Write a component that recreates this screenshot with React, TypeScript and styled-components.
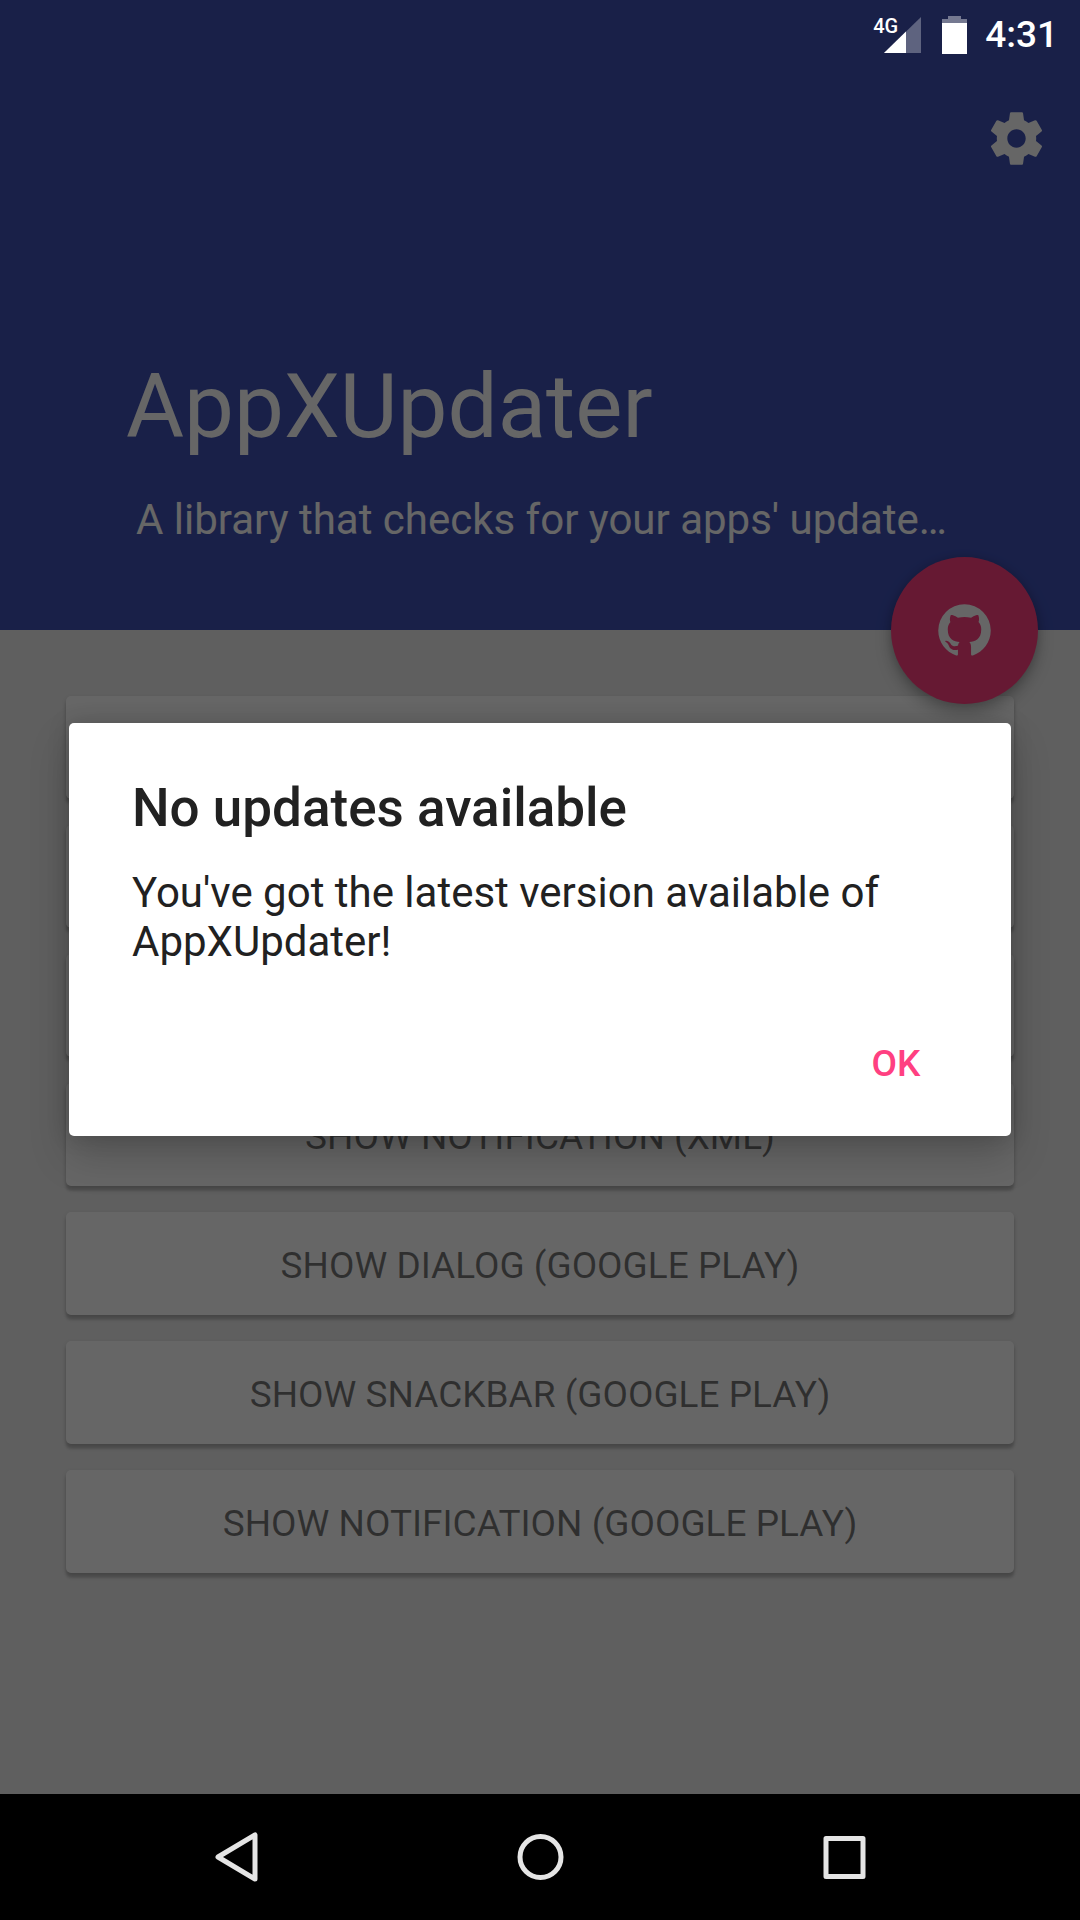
import React from "react";
import styled, { createGlobalStyle } from "styled-components";

const GlobalStyle = createGlobalStyle`
  * { box-sizing: border-box; }
  body {
    margin: 0;
    background: #000;
    font-family: Roboto, "Noto Sans", sans-serif;
  }
  button {
    margin: 0;
    padding: 0;
    border: 0;
    background: none;
    font: inherit;
    cursor: pointer;
  }
  h1, h2, p { margin: 0; font-weight: 400; }
  svg { display: block; }
`;

const Device = styled.div`
  display: flex;
  flex-direction: column;
  min-height: 100vh;
`;

const Stage = styled.div`
  position: relative;
  flex: 1;
  display: flex;
  flex-direction: column;
  background: #ededed;
`;

const StatusBar = styled.div`
  position: absolute;
  inset: 0 0 auto 0;
  z-index: 4;
  height: 66px;
  padding: 3px 22px 0;
  display: flex;
  align-items: center;
  justify-content: flex-end;
  color: #fff;
`;

const Network = styled.div`
  display: flex;
  align-items: flex-start;
  height: 40px;
  margin-right: 21px;
`;

const NetworkType = styled.span`
  font-size: 20px;
  line-height: 22px;
  font-weight: 500;
  margin-right: -14px;
`;

const Clock = styled.time`
  margin-left: 18px;
  font-size: 37px;
  line-height: 43px;
  font-weight: 500;
`;

const Header = styled.header`
  position: relative;
  min-height: 630px;
  padding: 107px 32px 86px 126px;
  display: flex;
  flex-direction: column;
  justify-content: space-between;
  background: #3f51b5;
  color: #fff;
`;

const SettingsButton = styled.button`
  align-self: flex-end;
  color: #fff;
`;

const Heading = styled.div`
  display: flex;
  flex-direction: column;
  gap: 36px;
`;

const AppTitle = styled.h1`
  font-size: 89px;
  line-height: 104px;
`;

const Tagline = styled.p`
  padding-left: 10px;
  font-size: 42px;
  line-height: 49px;
  white-space: nowrap;
`;

const Fab = styled.button`
  position: absolute;
  right: 42px;
  bottom: -74px;
  z-index: 1;
  width: 147px;
  height: 147px;
  display: grid;
  place-items: center;
  border-radius: 50%;
  background: #ff4081;
  color: #fff;
  box-shadow: 0 8px 16px rgba(0, 0, 0, 0.28), 0 0 8px rgba(0, 0, 0, 0.12);
`;

const Actions = styled.main`
  display: flex;
  flex-direction: column;
  gap: 26px;
  padding: 66px;
`;

const ActionButton = styled.button`
  height: 103px;
  padding-top: 4px;
  border-radius: 5px;
  background: #fff;
  color: rgba(0, 0, 0, 0.54);
  font-size: 37px;
  line-height: 43px;
  text-transform: uppercase;
  box-shadow: 0 5px 3px rgba(0, 0, 0, 0.16), 0 2px 4px rgba(0, 0, 0, 0.16);
`;

const Scrim = styled.div`
  position: absolute;
  inset: 0;
  z-index: 3;
  padding-top: 65px;
  display: flex;
  align-items: center;
  justify-content: center;
  background: rgba(0, 0, 0, 0.6);
`;

const Dialog = styled.section`
  width: calc(100% - 138px);
  border-radius: 5px;
  background: #fff;
  color: #212121;
  box-shadow: 0 20px 40px rgba(0, 0, 0, 0.18), 0 0 22px rgba(0, 0, 0, 0.16);
`;

const DialogBody = styled.div`
  display: flex;
  flex-direction: column;
  gap: 29px;
  padding: 54px 63px 24px;
`;

const DialogTitle = styled.h2`
  font-size: 53px;
  line-height: 62px;
  font-weight: 500;
`;

const DialogText = styled.p`
  font-size: 42px;
  line-height: 49px;
`;

const DialogActions = styled.div`
  display: flex;
  justify-content: flex-end;
  padding: 10px 31px;
`;

const DialogButton = styled.button`
  min-width: 168px;
  height: 126px;
  color: #ff4081;
  font-size: 37px;
  line-height: 43px;
  font-weight: 500;
`;

const NavBar = styled.nav`
  height: 126px;
  padding: 0 84px;
  display: flex;
  background: #000;
`;

const NavButton = styled.button`
  flex: 1;
  display: grid;
  place-items: center;
`;

// Labels of buttons that sit behind the dialog are announced but not painted.
const ACTIONS = [
  { label: "Show update", covered: true },
  { label: "Show dialog (XML)", covered: true },
  { label: "Show snackbar (XML)", covered: true },
  { label: "Show notification (XML)", covered: false },
  { label: "Show dialog (Google Play)", covered: false },
  { label: "Show snackbar (Google Play)", covered: false },
  { label: "Show notification (Google Play)", covered: false },
];

const SignalIcon = () => (
  <svg width="37" height="40" viewBox="0 0 37 40" aria-hidden="true">
    <path d="M37 2V38H0Z" fill="#fff" fillOpacity="0.3" />
    <path d="M22 16.6V38H0Z" fill="#fff" />
  </svg>
);

const BatteryIcon = () => (
  <svg width="25" height="40" viewBox="0 0 25 40" aria-hidden="true">
    <path d="M6 1H19V4H25V8H0V4H6Z" fill="#fff" fillOpacity="0.4" />
    <path d="M0 8H25V39H0Z" fill="#fff" />
  </svg>
);

const GearIcon = () => (
  <svg width="63" height="63" viewBox="0 0 24 24" fill="currentColor" aria-hidden="true">
    <path d="M19.43 12.98c.04-.32.07-.64.07-.98s-.03-.66-.07-.98l2.11-1.65c.19-.15.24-.42.12-.64l-2-3.46c-.12-.22-.39-.3-.61-.22l-2.49 1c-.52-.4-1.08-.73-1.69-.98l-.38-2.65C14.46 2.18 14.25 2 14 2h-4c-.25 0-.46.18-.49.42l-.38 2.65c-.61.25-1.17.59-1.69.98l-2.49-1c-.23-.09-.49 0-.61.22l-2 3.46c-.13.22-.07.49.12.64l2.11 1.65c-.04.32-.07.65-.07.98s.03.66.07.98l-2.11 1.65c-.19.15-.24.42-.12.64l2 3.46c.12.22.39.3.61.22l2.49-1c.52.4 1.08.73 1.69.98l.38 2.65c.03.24.24.42.49.42h4c.25 0 .46-.18.49-.42l.38-2.65c.61-.25 1.17-.59 1.69-.98l2.49 1c.23.09.49 0 .61-.22l2-3.46c.12-.22.07-.49-.12-.64l-2.11-1.65zM12 15.5c-1.93 0-3.5-1.57-3.5-3.5s1.57-3.5 3.5-3.5 3.5 1.57 3.5 3.5-1.57 3.5-3.5 3.5z" />
  </svg>
);

const GitHubIcon = () => (
  <svg width="63" height="63" viewBox="0 0 24 24" fill="currentColor" aria-hidden="true">
    <path d="M12,2A10,10 0 0,0 2,12C2,16.42 4.87,20.17 8.84,21.5C9.34,21.58 9.5,21.27 9.5,21C9.5,20.77 9.5,20.14 9.5,19.31C6.73,19.91 6.14,17.97 6.14,17.97C5.68,16.81 5.03,16.5 5.03,16.5C4.12,15.88 5.1,15.9 5.1,15.9C6.1,15.97 6.63,16.93 6.63,16.93C7.5,18.45 8.97,18 9.54,17.76C9.63,17.11 9.89,16.67 10.17,16.42C7.95,16.17 5.62,15.31 5.62,11.5C5.62,10.39 6,9.5 6.65,8.79C6.55,8.54 6.2,7.5 6.75,6.15C6.75,6.15 7.59,5.88 9.5,7.17C10.29,6.95 11.15,6.84 12,6.84C12.85,6.84 13.71,6.95 14.5,7.17C16.41,5.88 17.25,6.15 17.25,6.15C17.8,7.5 17.45,8.54 17.35,8.79C18,9.5 18.38,10.39 18.38,11.5C18.38,15.32 16.04,16.16 13.81,16.41C14.17,16.72 14.5,17.33 14.5,18.26C14.5,19.6 14.5,20.68 14.5,21C14.5,21.27 14.66,21.59 15.17,21.5C19.14,20.16 22,16.42 22,12A10,10 0 0,0 12,2Z" />
  </svg>
);

const navStroke = {
  width: 50,
  height: 50,
  viewBox: "0 0 50 50",
  fill: "none",
  stroke: "#e5e5e5",
  strokeWidth: 5,
  strokeLinejoin: "round" as const,
  "aria-hidden": true,
};

export default function App() {
  return (
    <Device>
      <GlobalStyle />
      <Stage>
        <StatusBar>
          <Network>
            <NetworkType>4G</NetworkType>
            <SignalIcon />
          </Network>
          <BatteryIcon />
          <Clock>4:31</Clock>
        </StatusBar>

        <Header>
          <SettingsButton type="button" aria-label="Settings">
            <GearIcon />
          </SettingsButton>
          <Heading>
            <AppTitle>AppXUpdater</AppTitle>
            <Tagline>A library that checks for your apps' update…</Tagline>
          </Heading>
          <Fab type="button" aria-label="View on GitHub">
            <GitHubIcon />
          </Fab>
        </Header>

        <Actions>
          {ACTIONS.map(({ label, covered }) => (
            <ActionButton key={label} type="button" aria-label={label}>
              {covered ? null : label}
            </ActionButton>
          ))}
        </Actions>

        <Scrim>
          <Dialog role="dialog" aria-modal="true" aria-labelledby="dialog-title">
            <DialogBody>
              <DialogTitle id="dialog-title">No updates available</DialogTitle>
              <DialogText>
                You've got the latest version available of AppXUpdater!
              </DialogText>
            </DialogBody>
            <DialogActions>
              <DialogButton type="button">OK</DialogButton>
            </DialogActions>
          </Dialog>
        </Scrim>
      </Stage>

      <NavBar>
        <NavButton type="button" aria-label="Back">
          <svg {...navStroke}>
            <path d="M44 3V47L7 25Z" />
          </svg>
        </NavButton>
        <NavButton type="button" aria-label="Home">
          <svg {...navStroke}>
            <circle cx="25.5" cy="25" r="20.5" />
          </svg>
        </NavButton>
        <NavButton type="button" aria-label="Recent apps">
          <svg {...navStroke}>
            <rect x="7" y="6.5" width="37" height="38" />
          </svg>
        </NavButton>
      </NavBar>
    </Device>
  );
}
